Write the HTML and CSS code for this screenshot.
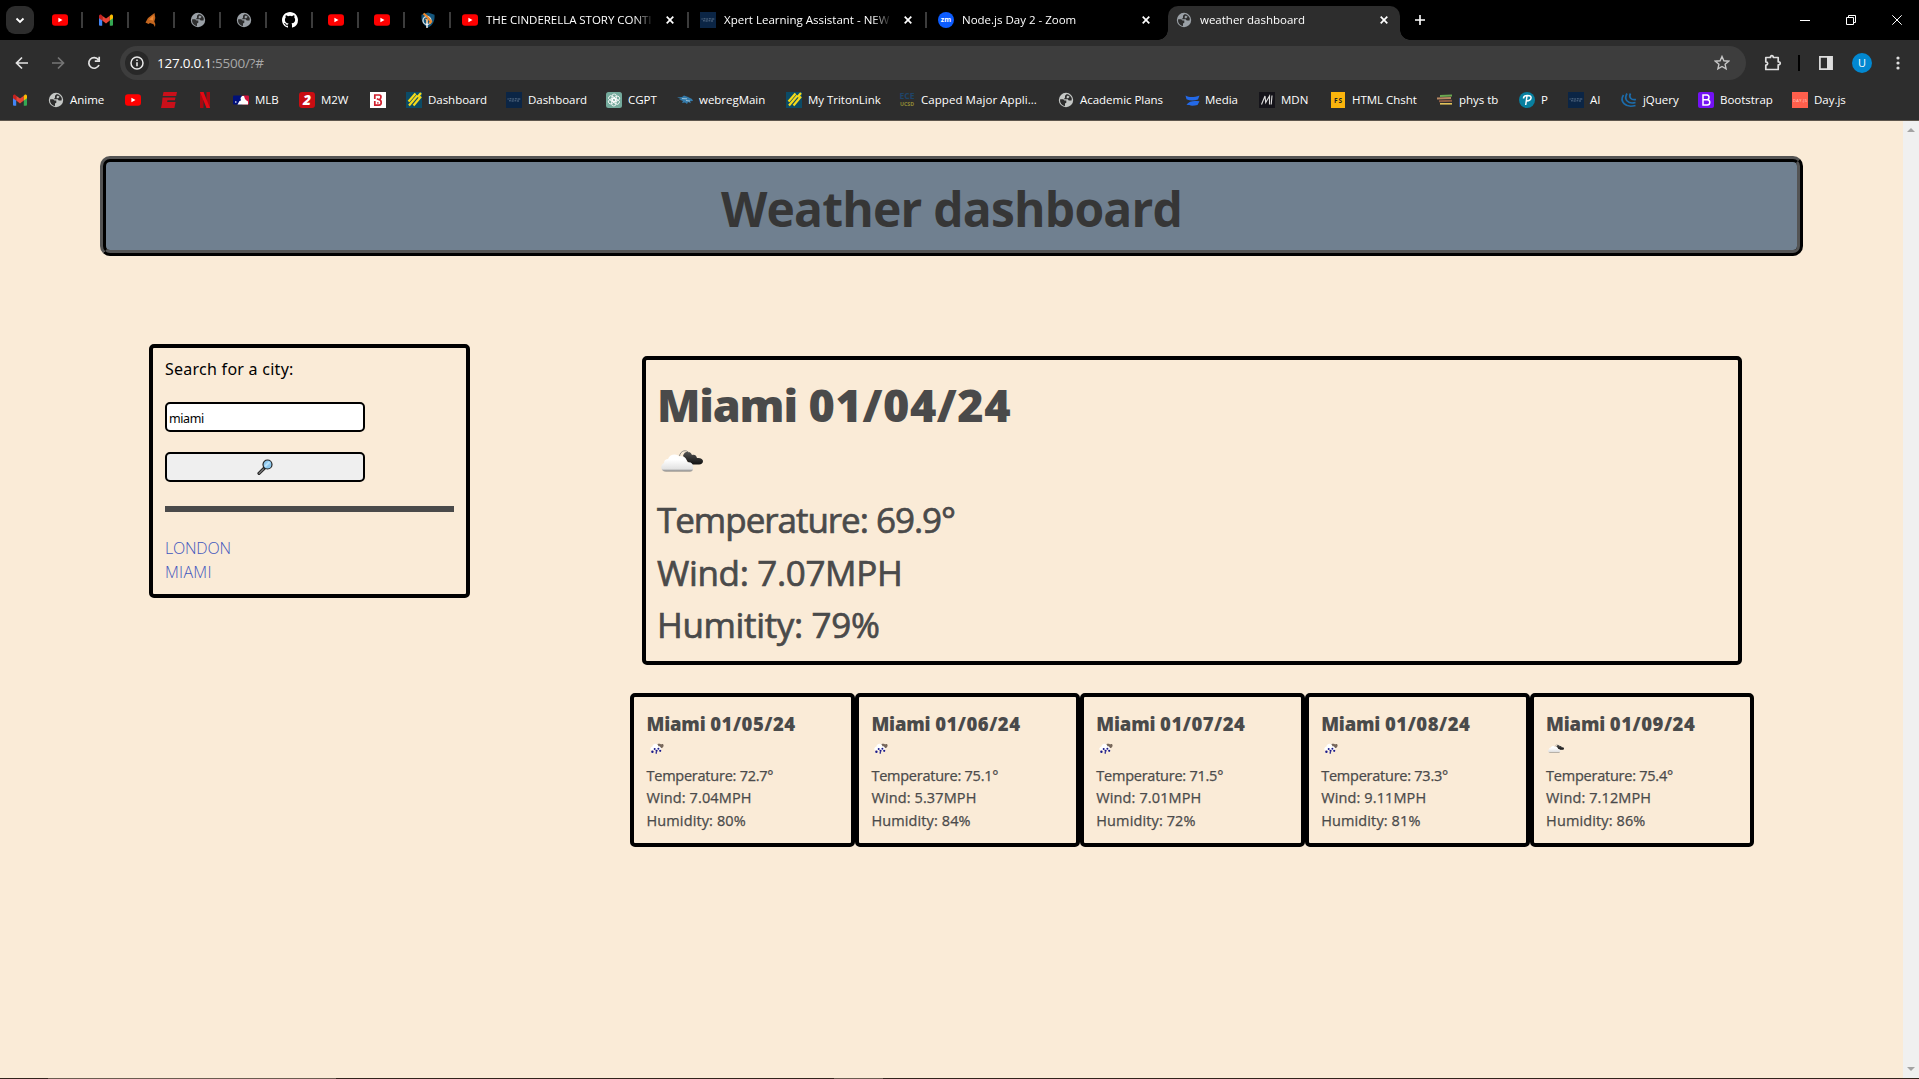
FILE: index.html
```html
<!DOCTYPE html>
<html lang="en">
<head>
<meta charset="utf-8">
<title>weather dashboard</title>
<link rel="stylesheet" href="styles.css">
</head>
<body>
<svg class="sprite" aria-hidden="true">
  <symbol id="youtube" viewBox="0 0 16 16"><rect y="2.300" width="16" height="11.400" rx="3" fill="#f00"/><path d="M6.400 5.700v4.600L10.500 8z" fill="#fff"/></symbol>
  <symbol id="gmail" viewBox="0 0 16 16"><path d="M1 4.200v8.500q0 1 1 1h2.200V7z" fill="#4285f4"/><path d="M15 4.200v8.500q0 1-1 1h-2.200V7z" fill="#34a853"/><path d="M4.200 3.700V8.600L8 11.400l3.800-2.800V3.700L8 6.500z" fill="#ea4335"/><path d="M1 6.200V4q0-2 2-1.500l1.200 1.200v4.900z" fill="#c5221f"/><path d="M15 6.200V4q0-2-2-1.500l-1.200 1.200v4.900z" fill="#fbbc04"/></symbol>
  <symbol id="globe" viewBox="0 0 16 16"><circle cx="8" cy="8" r="7.200" fill="currentColor"/><path d="M2.200 7.200h3l1.300 1.300h1.800v2.300l-1.300.6v2.700C3.800 13.600 1.500 10.500 2.200 7.200zM8.500 2.200L7 3.700v2.100L5.800 7.200h3.900l1 1.300h2.800l.3-1.800c-.3-2-2.300-4-4-4.500z" fill="#2d2d2d"/><path d="M9.800 3.500l1.800 1.300-1.300 1.500H8.700V4.500z" fill="currentColor"/></symbol>
  <symbol id="mapfox" viewBox="0 0 16 16"><path d="M10.500 1L4 6 1.500 10.500l3 1.500 1.500-1 3.500 1.200 1.500 2.800.3-3-1-2.500 1-3.500z" fill="#c4661f"/><path d="M9.500 3.500L5 7.500l4 1z" fill="#ee8a34"/></symbol>
  <symbol id="github" viewBox="0 0 16 16"><path fill="#fff" d="M8 0C3.580 0 0 3.580 0 8c0 3.540 2.290 6.530 5.470 7.590.4.070.55-.17.55-.38 0-.19-.01-.82-.01-1.490-2.010.37-2.530-.49-2.690-.94-.09-.23-.48-.94-.82-1.130-.28-.15-.68-.52-.01-.53.63-.01 1.080.58 1.230.82.72 1.210 1.870.87 2.330.66.070-.52.28-.87.510-1.070-1.780-.2-3.640-.89-3.640-3.950 0-.87.310-1.590.820-2.150-.080-.2-.360-1.020.080-2.120 0 0 .670-.210 2.200.820a7.600 7.600 0 0 1 4 0c1.530-1.040 2.200-.820 2.200-.820.440 1.100.160 1.920.080 2.120.510.560.820 1.270.820 2.150 0 3.070-1.870 3.750-3.650 3.950.290.250.540.730.540 1.480 0 1.070-.010 1.930-.010 2.200 0 .210.150.460.550.380A8.010 8.010 0 0 0 16 8c0-4.420-3.580-8-8-8z"/></symbol>
  <symbol id="shield" viewBox="0 0 16 16"><path d="M8 .5l6.500 2.300c.5 6-1.500 10.500-6.500 12.700C3 13.300 1 8.800 1.500 2.800z" fill="#14567c"/><circle cx="7" cy="8.500" r="4" fill="none" stroke="#d9dee0" stroke-width="1.300"/><path d="M3.500 1.500L6.500 4l4.500 5.500-1.500 2" fill="none" stroke="#f08a2c" stroke-width="2.200"/><path d="M7 7.500V16" stroke="#fff" stroke-width="1.400"/><path d="M5.500 7l2 1.500-1 2" fill="none" stroke="#f6b06a" stroke-width="1.200"/></symbol>
  <symbol id="xpert" viewBox="0 0 16 16"><rect width="16" height="16" fill="#0b2545"/><path d="M1.500 7h1.200M3.500 6.800h2M6.200 7H8M8.800 6.800h2M11.500 7h2.800M3 8.800h1.800M5.500 9h2.200M8.500 8.800h1.800M11 9h2" stroke="#71859d" stroke-width=".8"/></symbol>
  <symbol id="triton" viewBox="0 0 16 16"><rect width="16" height="16" fill="#0b4b66"/><path d="M3 13.500L11.500 3.500M2.500 9.500L9.500 1.500M7.500 13.500L15 4.500M11.500 5L15 1" stroke="#f4d91b" stroke-width="2.200" fill="none"/></symbol>
  <symbol id="cloud" viewBox="0 0 42 22"><defs><linearGradient id="puff" x2="0" y2="1"><stop offset=".3" stop-color="#fff"/><stop offset=".85" stop-color="#e2e2e2"/><stop offset="1" stop-color="#777"/></linearGradient><linearGradient id="storm" x2="0" y2="1"><stop stop-color="#555"/><stop offset="1" stop-color="#111"/></linearGradient></defs><path d="M22 6c1-5 7-6 9-1 2-1 4.500 0 5 3 3.500-.5 6 1 6 3s-1.500 3.500-4 3.500H29z" fill="url(#storm)"/><path d="M5 21.500c-6 0-6-7-2-8.500 0-3 2-4 4-4 2-6 10-5 11-2.500 5-1 8 2 8 6 4-1 6 1.500 6 3.500s1 5.500-3 5.500z" fill="url(#puff)"/><path d="M18.500 6c1-5.500 7-7 9.500-3" fill="none" stroke="#777" stroke-width=".8"/></symbol>
  <symbol id="rain" viewBox="0 0 16 12"><path d="M7 3c1-3 5-2.500 5.500-1.500C16-.5 16 5 13 5.500H9z" fill="#78685b"/><path d="M2 8C-.5 7 1 4 3 4c.5-4 6-4 6.500-.5C12 3 13 6 12 8z" fill="#fff"/><g fill="#1a1a8c"><circle cx="5.500" cy="6.500" r="1.100"/><circle cx="9.500" cy="6.300" r="1.100"/><circle cx="3" cy="9.500" r="1.300"/><circle cx="7.500" cy="8.500" r="1.200"/><circle cx="7.200" cy="10.800" r=".9"/><circle cx="11.500" cy="8.500" r="1.200"/></g></symbol>
  <symbol id="close" viewBox="0 0 8 8"><path d="M.7.7l6.600 6.600M7.300.7L.7 7.300" stroke="#fff" stroke-width="1.700"/></symbol>
</svg>

<header class="browser">
  <div class="tabs">
    <button class="tab-menu"><svg width="10" height="7"><path d="M1.500 1.500L5 5l3.500-3.500" fill="none" stroke="#fff" stroke-width="1.800"/></svg></button>
    <div class="pin"><svg><use href="#youtube"/></svg></div>
    <div class="pin"><svg><use href="#gmail"/></svg></div>
    <div class="pin"><svg><use href="#mapfox"/></svg></div>
    <div class="pin"><svg><use href="#globe"/></svg></div>
    <div class="pin"><svg><use href="#globe"/></svg></div>
    <div class="pin"><svg><use href="#github"/></svg></div>
    <div class="pin"><svg><use href="#youtube"/></svg></div>
    <div class="pin"><svg><use href="#youtube"/></svg></div>
    <div class="pin"><svg><use href="#shield"/></svg></div>
    <div class="tab"><svg><use href="#youtube"/></svg><span class="tab-title caps">THE CINDERELLA STORY CONTI</span><svg class="x"><use href="#close"/></svg></div>
    <div class="tab"><svg><use href="#xpert"/></svg><span class="tab-title">Xpert Learning Assistant - NEW</span><svg class="x"><use href="#close"/></svg></div>
    <div class="tab plain"><svg viewBox="0 0 16 16"><circle cx="8" cy="8" r="8" fill="#0b5cff"/><text x="8" y="10.300" text-anchor="middle" class="zm">zm</text></svg><span class="tab-title">Node.js Day 2 - Zoom</span><svg class="x"><use href="#close"/></svg></div>
    <div class="tab active"><svg><use href="#globe"/></svg><span class="tab-title">weather dashboard</span><svg class="x"><use href="#close"/></svg></div>
    <button class="new-tab"><svg width="10" height="10"><path d="M5 0v10M0 5h10" stroke="#fff" stroke-width="1.600"/></svg></button>
    <div class="window-controls">
      <svg width="10" height="10"><path d="M0 5.500h10" stroke="#fff"/></svg>
      <svg width="10" height="10" fill="none" stroke="#fff"><path d="M.5 2.500h7v7h-7zM2.500 2.500v-2h7v7h-2"/></svg>
      <svg width="10" height="10"><path d="M.3.3l9.400 9.400M9.700.3L.3 9.700" stroke="#fff"/></svg>
    </div>
  </div>

  <div class="toolbar">
    <svg class="nav" viewBox="0 0 16 16"><path d="M14 8H3M8 2.500L2.500 8 8 13.500" fill="none" stroke="#e3e3e3" stroke-width="1.700"/></svg>
    <svg class="nav" viewBox="0 0 16 16"><path d="M2 8h11M8 2.500L13.500 8 8 13.500" fill="none" stroke="#757575" stroke-width="1.700"/></svg>
    <svg class="nav" viewBox="0 0 16 16"><path d="M13 10a5.300 5.300 0 1 1-.6-5.200M13.200 1.800v4.400H8.800" fill="none" stroke="#e3e3e3" stroke-width="1.700"/></svg>
    <div class="omnibox">
      <span class="site-info"><svg width="14" height="14" viewBox="0 0 14 14"><circle cx="7" cy="7" r="6" fill="none" stroke="#e8e8e8" stroke-width="1.500"/><path d="M7 6.200v4M7 3.500v1.600" stroke="#e8e8e8" stroke-width="1.600"/></svg></span>
      <span class="url"><span class="host">127.0.0.1</span>:5500/?#</span>
      <svg class="star" width="16" height="16" viewBox="0 0 16 16"><path d="M8 1.500l1.900 4.300 4.700.4-3.500 3.100 1 4.600L8 11.500l-4.100 2.400 1-4.600-3.500-3.100 4.700-.4z" fill="none" stroke="#c7c7c7" stroke-width="1.400"/></svg>
    </div>
    <svg class="puzzle" width="18" height="18" viewBox="0 0 18 18"><path d="M1.800 3.500h4.700c-.3-2.500 3-2.500 2.800 0h4.900v4.300c2.700-.3 2.700 3.200 0 3v4.700H1.800v-4.300c2.500-.3 2.500-3 0-3.300z" fill="none" stroke="#dedede" stroke-width="1.700" stroke-linejoin="round"/></svg>
    <span class="divider"></span>
    <svg class="panel" width="16" height="16" viewBox="0 0 16 16"><path d="M1.900 1.900h12.200v12.200H1.900z" fill="none" stroke="#dedede" stroke-width="1.700"/><path d="M9 2h5v12H9z" fill="#dedede"/></svg>
    <span class="avatar">U</span>
    <svg class="dots" width="4" height="14" fill="#dedede"><circle cx="2" cy="2" r="1.600"/><circle cx="2" cy="7" r="1.600"/><circle cx="2" cy="12" r="1.600"/></svg>
  </div>

  <nav class="bookmarks">
    <a><svg><use href="#gmail"/></svg></a>
    <a><svg><use href="#globe"/></svg><span>Anime</span></a>
    <a><svg><use href="#youtube"/></svg></a>
    <a><svg viewBox="0 0 16 16"><path d="M2.500 0H16l-.8 4H1.700zM1.500 5.500h13l-.6 2.800H6.500l-.4 1.700h8.500l-1.200 6H0l1-5z" fill="#c9101a"/></svg></a>
    <a><svg viewBox="0 0 16 16"><path d="M3 0h3.500v16H3zM9.500 0H13v16H9.500z" fill="#a90810"/><path d="M3 0h3.500L13 16H9.500z" fill="#e50914"/></svg></a>
    <a><svg viewBox="0 0 16 16"><rect y="3.500" width="9" height="9" rx="1" fill="#00107a"/><rect x="9" y="3.500" width="7" height="9" rx="1" fill="#d3123b"/><path d="M4.500 12.500l2-3.500 1.500-.5L7.500 6 9 4h2l1 3 1.500 1.500 1.500 1v3z" fill="#fff"/><circle cx="2.800" cy="10" r=".8" fill="#fff"/></svg><span>MLB</span></a>
    <a><svg viewBox="0 0 16 16"><rect width="16" height="16" rx="3" fill="#c90d12"/><text x="8" y="13" text-anchor="middle" class="two">2</text></svg><span>M2W</span></a>
    <a><svg viewBox="0 0 16 16"><path d="M0 0h16v16H0z" fill="#fff"/><path d="M4.800 7V3h4.400q1.800 0 1.800 2T9 7.700L6.800 6.800M4.800 9v4.200h4.400q2 0 2-2.600T9 7.700M7.300 10.800h1.200" fill="none" stroke="#d0202e" stroke-width="1.700"/></svg></a>
    <a><svg><use href="#triton"/></svg><span>Dashboard</span></a>
    <a><svg><use href="#xpert"/></svg><span>Dashboard</span></a>
    <a><svg viewBox="0 0 16 16"><rect width="16" height="16" rx="2.500" fill="#74aa9c"/><g fill="none" stroke="#fff" stroke-width=".8"><rect x="6" y="2" width="4.400" height="7.500" rx="2.200"/><rect x="6" y="2" width="4.400" height="7.500" rx="2.200" transform="rotate(60 8 8)"/><rect x="6" y="2" width="4.400" height="7.500" rx="2.200" transform="rotate(120 8 8)"/><rect x="6" y="2" width="4.400" height="7.500" rx="2.200" transform="rotate(180 8 8)"/><rect x="6" y="2" width="4.400" height="7.500" rx="2.200" transform="rotate(240 8 8)"/><rect x="6" y="2" width="4.400" height="7.500" rx="2.200" transform="rotate(300 8 8)"/></g></svg><span>CGPT</span></a>
    <a><svg viewBox="0 0 16 16"><path d="M0 5.500l5-.5 2-1.500 4 1.500 4 2 1 2-3 .3 1 2-3-1.300-1 2-2-1.500-3 .5 1-2-4-1.500L4.500 7z" fill="#347bab"/><path d="M5 6.500l5 .3M9 8.500l4 .5" stroke="#b4d1e0" stroke-width=".8"/></svg><span>webregMain</span></a>
    <a><svg><use href="#triton"/></svg><span>My TritonLink</span></a>
    <a><svg viewBox="0 0 16 16"><text x=".5" y="7" textLength="15" lengthAdjust="spacingAndGlyphs" class="ece">ECE</text><text x="1" y="14" textLength="14" lengthAdjust="spacingAndGlyphs" class="ucsd">UCSD</text></svg><span class="wide">Capped Major Appli...</span></a>
    <a><svg><use href="#globe"/></svg><span>Academic Plans</span></a>
    <a><svg viewBox="0 0 16 16"><path d="M.5 3.500c4 2 8 2 14 0l-1.500 4c-4 1.500-8 1.500-11.500-.2zM1.500 12.500c3-3.500 7-4.200 13-3.200l-2 3.700c-4 1-8 1-11-.5z" fill="#2369e8"/></svg><span class="near">Media</span></a>
    <a><svg viewBox="0 0 16 16"><path d="M0 0h16v16H0z" fill="#15141a"/><path d="M2.500 12.500L6 4l.7 6.500L10.500 4v8.500M13 3.500l-.8 9" fill="none" stroke="#ddd" stroke-width="1.100"/></svg><span>MDN</span></a>
    <a><svg viewBox="0 0 16 16"><path d="M1 0h14v16H1z" fill="#fbb40c"/><text x="4" y="10.500" textLength="8" class="fs">FS</text></svg><span>HTML Chsht</span></a>
    <a><svg viewBox="0 0 16 16"><path d="M3 4l12-.5" stroke="#6aa84f" stroke-width="1.800"/><path d="M0 6.500l14-.5" stroke="#b98863" stroke-width="2"/><path d="M2 9.200l13-.5" stroke="#8b5a42" stroke-width="2"/><path d="M3 11.800h12" stroke="#e2c35a" stroke-width="1.600"/></svg><span>phys tb</span></a>
    <a><svg viewBox="0 0 16 16"><circle cx="8" cy="8" r="8" fill="#087f9f"/><path d="M4.500 6.500q0-3 4-3T12 6.200 7.500 9M8 4L6.700 13" fill="none" stroke="#fff" stroke-width="1.500"/></svg><span>P</span></a>
    <a><svg><use href="#xpert"/></svg><span>AI</span></a>
    <a><svg viewBox="0 0 16 16"><path d="M2.500 3C-1.500 9 4 16.500 14.500 13.500M6 1.500C2.500 7.500 7 12.500 14.500 10.500M9.500 1.500C7.500 5 10 8.500 15 7.500" fill="none" stroke="#1c6cab" stroke-width="1.700"/></svg><span>jQuery</span></a>
    <a><svg viewBox="0 0 16 16"><rect width="16" height="16" rx="2" fill="#7411f5"/><path d="M5 3h4q2 .2 2 2.300T9 7.700H5zM5 7.700h4.300Q11.800 8 11.800 10.400T9.200 13H5z" fill="none" stroke="#fff" stroke-width="1.500"/></svg><span>Bootstrap</span></a>
    <a><svg viewBox="0 0 16 16"><path d="M0 0h16v16H0z" fill="#ff5f4c"/><text x="1" y="9.500" textLength="14" class="dayjs">DAY.JS</text></svg><span>Day.js</span></a>
  </nav>
</header>

<div class="viewport">
  <div class="page">
    <h1 class="banner">Weather dashboard</h1>
    <main class="content">
      <aside class="search">
        <label for="city">Search for a city:</label>
        <div class="field" id="city">miami</div>
        <button class="submit"><svg width="16" height="16" viewBox="0 0 16 16"><path d="M7.500 9L2 14.300" stroke="#222" stroke-width="3.200" stroke-linecap="round"/><path d="M6.500 10L2.200 14.200" stroke="#777" stroke-width="1.400" stroke-linecap="round"/><circle cx="10.500" cy="5.500" r="4.500" fill="#8ec9ef" stroke="#222" stroke-width="1.200"/><path d="M8 7.500L12.500 3" stroke="#b9e1f9" stroke-width="2"/></svg></button>
        <hr>
        <ul class="history"><li><a>LONDON</a></li><li><a>MIAMI</a></li></ul>
      </aside>
      <section class="weather">
        <article class="today">
          <h2><span class="city">Miami</span> <span class="date">01/04/24</span></h2>
          <svg class="sky"><use href="#cloud"/></svg>
          <p>Temperature: 69.9°</p>
          <p>Wind: 7.07MPH</p>
          <p>Humitity: 79%</p>
        </article>
        <div class="forecast">
          <article><h3><span class="city">Miami</span> <span class="date">01/05/24</span></h3><svg class="sky"><use href="#rain"/></svg><p>Temperature: 72.7°</p><p>Wind: 7.04MPH</p><p>Humidity: 80%</p></article>
          <article><h3><span class="city">Miami</span> <span class="date">01/06/24</span></h3><svg class="sky"><use href="#rain"/></svg><p>Temperature: 75.1°</p><p>Wind: 5.37MPH</p><p>Humidity: 84%</p></article>
          <article><h3><span class="city">Miami</span> <span class="date">01/07/24</span></h3><svg class="sky"><use href="#rain"/></svg><p>Temperature: 71.5°</p><p>Wind: 7.01MPH</p><p>Humidity: 72%</p></article>
          <article><h3><span class="city">Miami</span> <span class="date">01/08/24</span></h3><svg class="sky"><use href="#rain"/></svg><p>Temperature: 73.3°</p><p>Wind: 9.11MPH</p><p>Humidity: 81%</p></article>
          <article><h3><span class="city">Miami</span> <span class="date">01/09/24</span></h3><svg class="sky"><use href="#cloud"/></svg><p>Temperature: 75.4°</p><p>Wind: 7.12MPH</p><p>Humidity: 86%</p></article>
        </div>
      </section>
    </main>
  </div>
  <div class="scrollbar"><i class="up"></i><i class="down"></i></div>
</div>
<footer class="taskbar"><i class="running"></i><i class="pinned"></i></footer>
</body>
</html>
```
FILE: styles.css
```css
* { box-sizing: border-box; }

body {
  margin: 0;
  height: 1079px;
  display: flex;
  flex-direction: column;
  overflow: hidden;
  background: #faebd7;
  font-family: "Open Sans", "Noto Sans", sans-serif;
}

h1, h2, h3, p, ul { margin: 0; padding: 0; }
button { padding: 0; border: 0; }
svg { display: block; flex: none; }
.sprite { display: block; width: 0; height: 0; position: absolute; }

/* Browser frame */
.browser {
  height: 121px;
  flex: none;
  background: #2d2d2d;
  border-bottom: 1px solid #5d564d;
  color: #fff;
  font-size: 11.500px;
}

.tabs {
  height: 40px;
  display: flex;
  background: #000;
}

.tab-menu {
  width: 28px;
  height: 28px;
  margin: 6px 4px 0 6px;
  border-radius: 9px;
  background: #2d2d2d;
  display: grid;
  place-items: center;
}

.pin, .tab {
  height: 40px;
  display: flex;
  align-items: center;
  background: linear-gradient(#3c3c3c, #3c3c3c) right 1px top 12px / 2px 16px no-repeat;
  color: #fff;
}
.pin { width: 46px; padding-left: 14px; }
.pin svg, .tab svg { width: 16px; height: 16px; color: #9aa0a6; }
.tab { width: 238px; padding-left: 10px; }
.tab svg.x { width: 8px; height: 8px; }
.tab-title {
  width: 168px;
  margin: 0 12px 0 8px;
  white-space: nowrap;
  line-height: 20px;
  -webkit-mask-image: linear-gradient(90deg, #000 148px, transparent 168px);
  mask-image: linear-gradient(90deg, #000 148px, transparent 168px);
}
.tab-title.caps { letter-spacing: -.03px; }
.tab.plain { background: none; }
.tab.active {
  position: relative;
  width: 232px;
  height: 34px;
  margin: 6px 0 0 2px;
  padding: 0 0 6px 8px;
  border-radius: 10px 10px 0 0;
  background: #2d2d2d;
}
.tab.active::before, .tab.active::after {
  content: "";
  position: absolute;
  bottom: 0;
  width: 10px;
  height: 10px;
}
.tab.active::before { left: -10px; background: radial-gradient(circle at 0 0, transparent 9.500px, #2d2d2d 10px); }
.tab.active::after { right: -10px; background: radial-gradient(circle at 100% 0, transparent 9.500px, #2d2d2d 10px); }

.new-tab { margin: 15px 0 0 15px; width: 10px; height: 10px; background: none; }
.window-controls { margin: 15px 17px 0 auto; display: flex; gap: 36px; }

.zm { font: 700 7px "Open Sans", sans-serif; fill: #fff; }
.two { font: italic 800 14px "Open Sans", sans-serif; fill: #fff; }
.ece { font: 700 8px "Open Sans", sans-serif; fill: #1f4468; }
.ucsd { font: 700 6px "Open Sans", sans-serif; fill: #8f8a35; }
.fs { font: 700 6.500px "Open Sans", sans-serif; fill: #222; }
.dayjs { font: 400 4px "Open Sans", sans-serif; fill: #ffd0ca; }

.toolbar {
  height: 40px;
  padding: 6px 19px 0 14px;
  display: flex;
  align-items: center;
}
.nav { width: 16px; height: 16px; margin-right: 20px; }
.omnibox {
  width: 1626px;
  height: 34px;
  margin-left: -2px;
  padding: 0 16px 0 5px;
  display: flex;
  align-items: center;
  border-radius: 17px;
  background: #3d3d3d;
}
.site-info {
  width: 24px;
  height: 24px;
  border-radius: 50%;
  background: #282828;
  display: grid;
  place-items: center;
}
.url { margin-left: 8px; font-size: 13.500px; letter-spacing: -.25px; color: #a8a8a8; line-height: 20px; }
.host { color: #fff; }
.star { margin-left: auto; }
.puzzle { margin-left: 18px; }
.divider { width: 2px; height: 16px; margin-left: 16px; background: #000; }
.panel { margin-left: 18px; }
.avatar {
  width: 20px;
  height: 20px;
  margin-left: 18px;
  border-radius: 50%;
  background: #0288d1;
  font-size: 11px;
  line-height: 20px;
  text-align: center;
}
.dots { margin-left: auto; }

.bookmarks {
  height: 40px;
  padding-left: 12px;
  display: grid;
  grid-template-columns: 36px 77px 36px 36px 36px 66px 71px 36px 100px 100px 71px 109px 113px 159px 127px 74px 71px 107px 82px 49px 53px 77px 94px 80px;
  align-items: center;
}
.bookmarks a { display: flex; align-items: center; gap: 6px; white-space: nowrap; line-height: 20px; letter-spacing: -.03px; }
.bookmarks svg { width: 16px; height: 16px; overflow: visible; color: #c4c7c5; }
.bookmarks .near { margin-left: -2px; }
.bookmarks .wide { letter-spacing: .06px; }

/* Page */
.viewport { flex: 1; display: flex; min-height: 0; }
.page { flex: 1; min-width: 0; padding: 35px 100px 0; }

.banner {
  height: 100px;
  border: 6px ridge #000;
  border-radius: 10px;
  background: #708090;
  color: #363636;
  font-size: 48px;
  font-weight: 700;
  letter-spacing: -.8px;
  line-height: 93px;
  text-align: center;
}

.content { padding: 88px 48px 0 49px; display: flex; align-items: flex-start; }

.search {
  width: 321px;
  height: 254px;
  flex: none;
  padding: 11px 12px 12px;
  border: 4px solid #000;
  border-radius: 5px;
  color: #000;
}
.search label { display: block; font: 16px/20px "Noto Sans", sans-serif; letter-spacing: .26px; }
.field, .submit {
  width: 200px;
  height: 30px;
  border: 2px solid #000;
  border-radius: 5px;
}
.field { margin-top: 23px; padding-left: 2px; background: #fff; font: 12.500px/29px "Noto Sans", sans-serif; letter-spacing: -.4px; }
.submit { margin-top: 20px; display: grid; place-items: center; background: #efefef; }
.search hr { height: 6px; margin: 24px 0 0; border: 0; background: #4a4a4a; }
.history { margin-top: 24px; list-style: none; font-size: 16px; font-weight: 300; line-height: 24px; letter-spacing: -.2px; color: #3f55bd; }
.history li:last-child { letter-spacing: .3px; }

.weather { margin: 12px 0 0 160px; width: 1124.500px; flex: none; }
.today {
  height: 309px;
  margin: 0 12.500px 0 12px;
  padding: 11px;
  border: 4px solid #000;
  border-radius: 5px;
  color: #4a4a4a;
}
.today h2 { font-size: 45px; font-weight: 800; line-height: 68px; }
.today .city { letter-spacing: -1.200px; }
.today .date { letter-spacing: .6px; }
.today .sky { width: 42px; height: 22px; margin: 11px 0 22px 4px; }
.today p {
  font-size: 35px;
  line-height: 52.500px;
  letter-spacing: -.35px;
  -webkit-text-stroke: .7px currentColor;
}
.today p:first-of-type { letter-spacing: -1.030px; }

.forecast { margin-top: 28px; display: grid; grid-template-columns: repeat(5, 1fr); }
.forecast article {
  height: 154px;
  padding: 12px 12px 12px 12.500px;
  border: 4px solid #000;
  border-radius: 5px;
  color: #4a4a4a;
}
.forecast h3 { font-size: 18.500px; font-weight: 800; line-height: 30px; white-space: nowrap; }
.forecast .city { letter-spacing: -.2px; }
.forecast .date { letter-spacing: .5px; }
.forecast .sky { width: 16px; height: 11px; margin: 4px 0 11px 2px; }
.forecast p {
  font-size: 14.500px;
  line-height: 22.300px;
  letter-spacing: .12px;
  -webkit-text-stroke: .25px currentColor;
}
.forecast p:first-of-type { letter-spacing: -.24px; }

.scrollbar {
  width: 16px;
  padding: 7px 4px;
  display: flex;
  flex-direction: column;
  justify-content: space-between;
  background: #f0f0f0;
}
.scrollbar i { border: 4px solid transparent; }
.scrollbar .up { border-top: 0; border-bottom-color: #a3a3a3; }
.scrollbar .down { border-bottom: 0; border-top-color: #a3a3a3; }

.taskbar { height: 1px; flex: none; display: flex; background: #32241c; }
.running { width: 288px; margin-left: 48px; background: #6b5c50; }
.pinned { width: 49px; margin-left: 498px; background: #6b5c50; }
```
